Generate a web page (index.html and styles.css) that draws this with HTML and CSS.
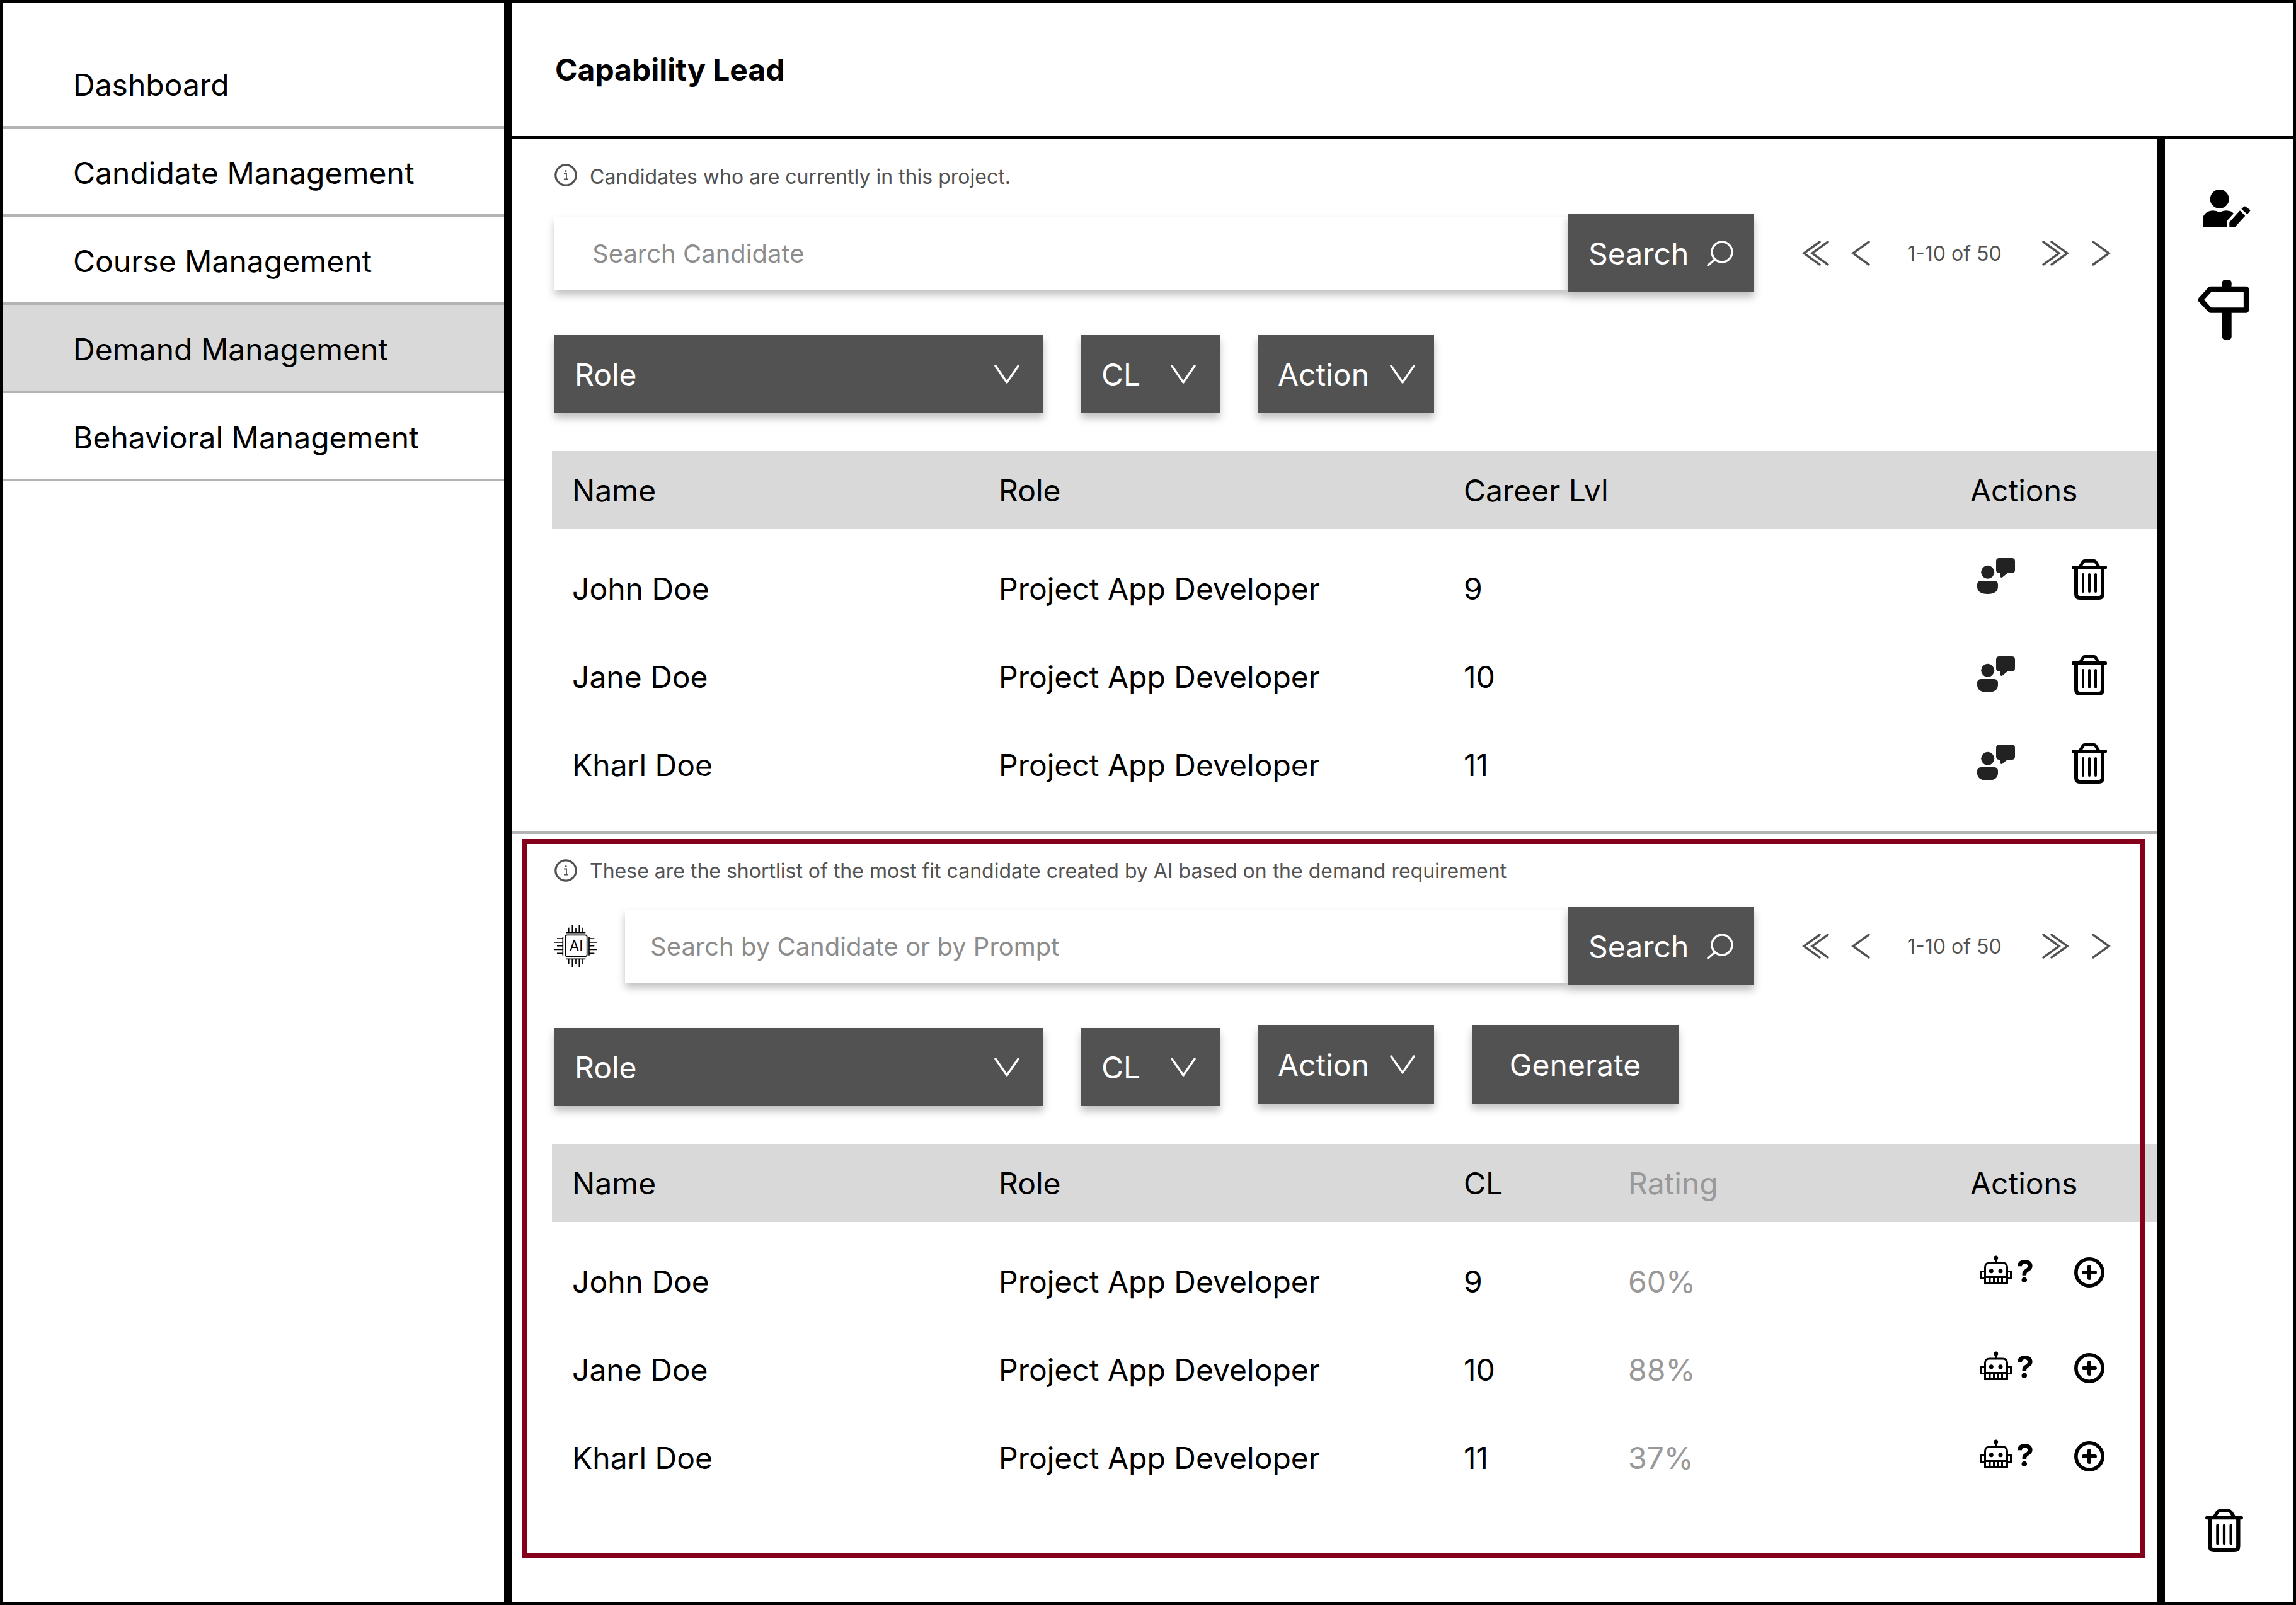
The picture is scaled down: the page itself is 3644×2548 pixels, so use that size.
FILE: index.html
```html
<!DOCTYPE html>
<html>
	<head>
		<title>Capability Lead</title>
		<link rel="stylesheet" href="styles.css">
	</head>
	<body>
		<svg class="sprite">
			<symbol id="i-info" viewBox="0 0 36 36">
				<circle cx="18" cy="18" r="16.2" fill="none" stroke="#525252" stroke-width="3.2"/>
				<path d="M15 15.5h4v8.5M15 24.5h6.5" fill="none" stroke="#525252" stroke-width="1.8"/>
				<circle cx="18" cy="11.5" r="1.6" fill="#525252"/>
			</symbol>
			<symbol id="i-search" viewBox="0 0 44 40">
				<circle cx="24" cy="18" r="16" fill="none" stroke="#fff" stroke-width="3.4"/>
				<path d="M12.5 30L2 39" fill="none" stroke="#fff" stroke-width="3.4" stroke-linecap="round"/>
			</symbol>
			<symbol id="i-double" viewBox="0 0 44 40">
				<path d="M28 2L3 20l25 18M41 2L16 20l25 18" fill="none" stroke="#525252" stroke-width="3.4" stroke-linecap="round"/>
			</symbol>
			<symbol id="i-single" viewBox="0 0 30 40">
				<path d="M28 2L3 20l25 18" fill="none" stroke="#525252" stroke-width="3.4" stroke-linecap="round"/>
			</symbol>
			<symbol id="i-down" viewBox="0 0 40 30">
				<path d="M2 2l18 26L38 2" fill="none" stroke="#fff" stroke-width="3.4" stroke-linecap="round" stroke-linejoin="round"/>
			</symbol>
			<symbol id="i-chat" viewBox="0 0 60 57">
				<circle cx="16.7" cy="22.3" r="10.5" fill="#222"/>
				<path fill="#222" d="M6 36h21q6 0 6 6v3q0 12-16.5 12T0 45v-3q0-6 6-6z"/>
				<path fill="#222" d="M35 0h20q5 0 5 5v14q0 5-5 5h-7l-8 6.500q-3.500 1.500-4-2.500v-4h-1q-5 0-5-5V5q0-5 5-5z"/>
			</symbol>
			<symbol id="i-trash" viewBox="0 0 56 64">
				<g fill="none" stroke="#000" stroke-linecap="round" stroke-linejoin="round">
					<path d="M2.500 12.700h51" stroke-width="5.400"/>
					<path d="M13 12l5-8q1.500-1.700 3.500-1.700h13q2 0 3.500 1.700l5 8" stroke-width="5"/>
					<path d="M7 13v42q0 6 6 6h30q6 0 6-6V13" stroke-width="6"/>
					<path d="M18 24v27M28 24v27M38 24v27" stroke-width="4"/>
				</g>
			</symbol>
			<symbol id="i-robot" viewBox="0 0 50 46">
				<g fill="none" stroke="#000" stroke-width="3">
					<path d="M7.500 44.500V19q0-7 7-7h21q7 0 7 7v25.500z"/>
					<path d="M7.500 25.500H1.500v10h6M42.500 25.500h6v10h-6M25 5v7M7.500 34.500h35M15 34.500v10M21.500 34.500v10M28 34.500v10M34.500 34.500v10"/>
				</g>
				<circle cx="24.700" cy="4" r="3.500"/>
				<circle cx="17.300" cy="24.700" r="3.500"/>
				<circle cx="32" cy="24.700" r="3.500"/>
			</symbol>
			<symbol id="i-plus" viewBox="0 0 48 48">
				<circle cx="24" cy="24" r="21.200" fill="none" stroke="#000" stroke-width="5.600"/>
				<path d="M15 24h18M24 15v18" stroke="#000" stroke-width="6" stroke-linecap="round"/>
			</symbol>
			<symbol id="i-person" viewBox="0 0 80 62">
				<circle cx="27.700" cy="16" r="15"/>
				<path d="M4 61q-3 0-3-4v-7q0-10 8-14 9-4 18.700 1 9.300-5 19.300-1l3 3-10 11q-1 2-1 4v7z"/>
				<path d="M44.500 61q-1.200 0-1.200-1.500v-6.800L60 34.300l8.300 8.400-16 17.600q-.7.700-1.700.7zM62.300 31.700l4.400-4q.8-.6 1.800 0l7.300 5.300q1 1 .2 2l-4.300 5.300z"/>
			</symbol>
			<symbol id="i-sign" viewBox="0 0 84 96">
				<rect x="39.700" y="0" width="15" height="14" rx="5"/>
				<rect x="39.700" y="48" width="15" height="47.500" rx="5"/>
				<path d="M78 15v33.500H21L5.500 32 21 15z" fill="none" stroke="#000" stroke-width="8.300" stroke-linejoin="round"/>
			</symbol>
			<symbol id="i-chip" viewBox="0 0 68 68">
				<g fill="none" stroke="#000" stroke-width="1.700">
					<rect x="17.300" y="16.300" width="34.400" height="34" rx="3"/>
					<path d="M18.300 12.700h31M22.700 12.700V4.700M28.300 12.700V.3M34 12.700V6M39.300 12.700V.3M45 12.700V4.700"/>
					<path d="M18.300 54.300h31M22.700 54.300V63M28.300 54.300V67M34 54.300V63M39.300 54.300V67M45 54.300V63"/>
					<path d="M13.300 19.300v29.400M13.300 22H4M13.300 28H0M13.300 33.700H4M13.300 39.300H0M13.300 45.300H4"/>
					<path d="M55 19.300v29.400M55 22h8.300M55 28h12.300M55 33.700h8.300M55 39.300h12.300M55 45.300h8.300"/>
				</g>
				<text class="chip-label" x="34.500" y="41.500" text-anchor="middle">AI</text>
			</symbol>
		</svg>

		<div class="frame">
			<aside class="sidebar">
				<div class="nav-item">Dashboard</div>
				<div class="nav-item">Candidate Management</div>
				<div class="nav-item">Course Management</div>
				<div class="nav-item active">Demand Management</div>
				<div class="nav-item">Behavioral Management</div>
			</aside>

			<div class="main">
				<header class="topbar">Capability Lead</header>

				<div class="workspace">
					<div class="content">
						<section class="panel current">
							<div class="note">
								<svg class="ic-info"><use href="#i-info"/></svg>
								<span>Candidates who are currently in this project.</span>
							</div>
							<div class="search-row">
								<div class="search-box">Search Candidate</div>
								<div class="search-btn">Search <svg class="ic-search"><use href="#i-search"/></svg></div>
								<div class="pager">
									<svg class="ic-double"><use href="#i-double"/></svg>
									<svg class="ic-single"><use href="#i-single"/></svg>
									<span class="pager-text">1-10 of 50</span>
									<svg class="ic-double flip"><use href="#i-double"/></svg>
									<svg class="ic-single flip"><use href="#i-single"/></svg>
								</div>
							</div>
							<div class="filters">
								<div class="drop drop-role">Role <svg class="ic-down"><use href="#i-down"/></svg></div>
								<div class="drop drop-cl">CL <svg class="ic-down"><use href="#i-down"/></svg></div>
								<div class="drop drop-action">Action <svg class="ic-down"><use href="#i-down"/></svg></div>
							</div>
							<div class="thead row-current">
								<div>Name</div><div>Role</div><div>Career Lvl</div><div>Actions</div>
							</div>
							<div class="rows">
								<div class="row row-current first">
									<div>John Doe</div><div>Project App Developer</div><div>9</div>
									<div class="acts acts-current"><svg class="ic-chat"><use href="#i-chat"/></svg><svg class="ic-trash"><use href="#i-trash"/></svg></div>
								</div>
								<div class="row row-current">
									<div>Jane Doe</div><div>Project App Developer</div><div>10</div>
									<div class="acts acts-current"><svg class="ic-chat"><use href="#i-chat"/></svg><svg class="ic-trash"><use href="#i-trash"/></svg></div>
								</div>
								<div class="row row-current">
									<div>Kharl Doe</div><div>Project App Developer</div><div>11</div>
									<div class="acts acts-current"><svg class="ic-chat"><use href="#i-chat"/></svg><svg class="ic-trash"><use href="#i-trash"/></svg></div>
								</div>
							</div>
						</section>

						<section class="panel shortlist">
							<div class="note">
								<svg class="ic-info"><use href="#i-info"/></svg>
								<span>These are the shortlist of the most fit candidate created by AI based on the demand requirement</span>
							</div>
							<div class="search-row">
								<svg class="ic-chip"><use href="#i-chip"/></svg>
								<div class="search-box prompt">Search by Candidate or by Prompt</div>
								<div class="search-btn">Search <svg class="ic-search"><use href="#i-search"/></svg></div>
								<div class="pager">
									<svg class="ic-double"><use href="#i-double"/></svg>
									<svg class="ic-single"><use href="#i-single"/></svg>
									<span class="pager-text">1-10 of 50</span>
									<svg class="ic-double flip"><use href="#i-double"/></svg>
									<svg class="ic-single flip"><use href="#i-single"/></svg>
								</div>
							</div>
							<div class="filters filters-tight">
								<div class="drop drop-role low">Role <svg class="ic-down"><use href="#i-down"/></svg></div>
								<div class="drop drop-cl low">CL <svg class="ic-down"><use href="#i-down"/></svg></div>
								<div class="drop drop-action">Action <svg class="ic-down"><use href="#i-down"/></svg></div>
								<div class="drop drop-generate">Generate</div>
							</div>
							<div class="thead row-short">
								<div>Name</div><div>Role</div><div>CL</div><div class="muted">Rating</div><div>Actions</div>
							</div>
							<div class="rows">
								<div class="row row-short first">
									<div>John Doe</div><div>Project App Developer</div><div>9</div><div class="muted">60%</div>
									<div class="acts acts-short"><svg class="ic-robot"><use href="#i-robot"/></svg><span class="ask">?</span><svg class="ic-plus"><use href="#i-plus"/></svg></div>
								</div>
								<div class="row row-short">
									<div>Jane Doe</div><div>Project App Developer</div><div>10</div><div class="muted">88%</div>
									<div class="acts acts-short"><svg class="ic-robot"><use href="#i-robot"/></svg><span class="ask">?</span><svg class="ic-plus"><use href="#i-plus"/></svg></div>
								</div>
								<div class="row row-short">
									<div>Kharl Doe</div><div>Project App Developer</div><div>11</div><div class="muted">37%</div>
									<div class="acts acts-short"><svg class="ic-robot"><use href="#i-robot"/></svg><span class="ask">?</span><svg class="ic-plus"><use href="#i-plus"/></svg></div>
								</div>
							</div>
						</section>
					</div>

					<div class="rail">
						<svg class="ic-person"><use href="#i-person"/></svg>
						<svg class="ic-sign"><use href="#i-sign"/></svg>
						<svg class="ic-rail-trash"><use href="#i-trash"/></svg>
					</div>
				</div>
			</div>
		</div>
	</body>
</html>
```
FILE: styles.css
```css
* {
	box-sizing: border-box;
}

body {
	margin: 0;
	font-family: Inter, "Liberation Sans", sans-serif;
	font-size: 48px;
	color: #000;
	background-color: #fff;
}

svg {
	display: block;
	flex: none;
}

.sprite {
	display: none;
}

.chip-label {
	font-family: Inter, sans-serif;
	font-size: 23px;
}

.frame {
	display: flex;
	width: 3644px;
	height: 2548px;
	border: 4px solid #000;
}

/* left nav */
.sidebar {
	flex: none;
	width: 808px;
	padding-top: 60px;
	border-right: 12px solid #000;
}

.nav-item {
	display: flex;
	align-items: center;
	height: 140px;
	padding: 4px 0 0 112px;
	border-bottom: 4px solid #b3b3b3;
}

.nav-item.active {
	background-color: #d9d9d9;
}

.main {
	display: flex;
	flex-direction: column;
	flex: 1;
	min-width: 0;
}

.topbar {
	flex: none;
	display: flex;
	align-items: center;
	height: 216px;
	padding: 0 0 0 69px;
	border-bottom: 4px solid #000;
	font-weight: 700;
}

.workspace {
	display: flex;
	flex: 1;
}

.content {
	display: flex;
	flex-direction: column;
	width: 2624px;
	border-right: 12px solid #000;
}

/* panels */
.panel {
	padding: 40px 0 0 68px;
}

.current {
	height: 1104px;
	border-bottom: 4px solid #b3b3b3;
}

.shortlist {
	position: relative;
	flex: 1;
}

.shortlist::after {
	content: "";
	position: absolute;
	top: 8px;
	left: 17px;
	right: 20px;
	bottom: 70px;
	border: 8px solid #85001a;
	pointer-events: none;
}

.note {
	display: flex;
	align-items: center;
	gap: 20px;
	height: 36px;
	font-size: 32px;
	color: #525252;
}

.current .note span {
	padding-top: 4px;
}

.ic-info {
	width: 36px;
	height: 36px;
}

.search-row {
	display: flex;
	align-items: center;
	height: 124px;
	margin-top: 44px;
}

.shortlist .search-row {
	margin-top: 40px;
}

.search-box {
	display: flex;
	align-items: center;
	width: 1608px;
	height: 116px;
	padding-left: 60px;
	background-color: #fff;
	color: #8c8c8c;
	font-size: 40px;
	box-shadow: 0 8px 12px rgba(0, 0, 0, .25);
}

.search-box.prompt {
	width: 1496px;
	margin-left: 44px;
	padding-left: 40px;
}

.ic-chip {
	width: 68px;
	height: 68px;
}

.search-btn {
	position: relative;
	display: flex;
	align-items: center;
	justify-content: space-between;
	width: 296px;
	height: 124px;
	padding: 0 31px 0 33px;
	background-color: #525252;
	color: #fff;
	box-shadow: 0 8px 12px rgba(0, 0, 0, .25);
}

.ic-search {
	width: 44px;
	height: 40px;
}

.pager {
	display: flex;
	align-items: center;
	margin-left: 76px;
}

.ic-double {
	width: 44px;
	height: 40px;
}

.ic-single {
	width: 30px;
	height: 40px;
	margin-left: 34px;
}

.flip {
	transform: scaleX(-1);
}

.flip.ic-single {
	margin-left: 36px;
}

.pager-text {
	width: 272px;
	padding-left: 59px;
	font-size: 32px;
	color: #525252;
}

/* filters */
.filters {
	display: flex;
	align-items: flex-start;
	margin-top: 68px;
}

.filters-tight {
	margin-top: 64px;
	height: 128px;
}

.drop {
	display: flex;
	align-items: center;
	justify-content: space-between;
	height: 124px;
	padding: 0 38px 0 32px;
	background-color: #525252;
	color: #fff;
	box-shadow: 0 8px 12px rgba(0, 0, 0, .25);
}

.drop.low {
	margin-top: 4px;
}

.drop-role {
	width: 776px;
}

.drop-cl {
	width: 220px;
	margin-left: 60px;
}

.drop-action {
	width: 280px;
	margin-left: 60px;
	padding-right: 30px;
}

.drop-generate {
	justify-content: center;
	width: 328px;
	margin-left: 60px;
	padding: 0;
}

.ic-down {
	width: 40px;
	height: 30px;
}

/* tables */
.thead, .row {
	display: grid;
	align-items: center;
	padding-left: 32px;
	margin-left: -4px;
}

.thead {
	height: 124px;
	margin-top: 60px;
	background-color: #d9d9d9;
}

.rows {
	margin-top: 24px;
}

.row {
	height: 140px;
}

.row-current {
	grid-template-columns: 677px 738px 804px 1fr;
}

.row-short {
	grid-template-columns: 677px 738px 261px 543px 1fr;
}

.muted {
	color: #999;
}

.acts {
	display: flex;
	align-items: center;
	margin-bottom: 4px;
}

.first .acts {
	margin-bottom: 28px;
}

.acts-current {
	padding-left: 11px;
}

.acts-short {
	padding-left: 16px;
}

.ic-chat {
	width: 60px;
	height: 57px;
	margin-bottom: 4px;
}

.first .ic-chat {
	margin-bottom: 12px;
}

.ic-trash {
	width: 56px;
	height: 64px;
	margin-left: 90px;
}

.ic-robot {
	width: 50px;
	height: 46px;
	margin-bottom: 8px;
}

.ask {
	width: 23px;
	margin-left: 7px;
	font-size: 50px;
	font-weight: 700;
	margin-bottom: 4px;
}

.ic-plus {
	width: 48px;
	height: 48px;
	margin-left: 69px;
}

/* right tools */
.rail {
	display: flex;
	flex-direction: column;
	flex: 1;
	padding: 80px 0 80px 59px;
}

.ic-person {
	width: 80px;
	height: 62px;
}

.ic-sign {
	width: 84px;
	height: 96px;
	margin: 82px 0 0 -8px;
}

.ic-rail-trash {
	width: 60px;
	height: 68px;
	margin: auto 0 0 5px;
}
```
